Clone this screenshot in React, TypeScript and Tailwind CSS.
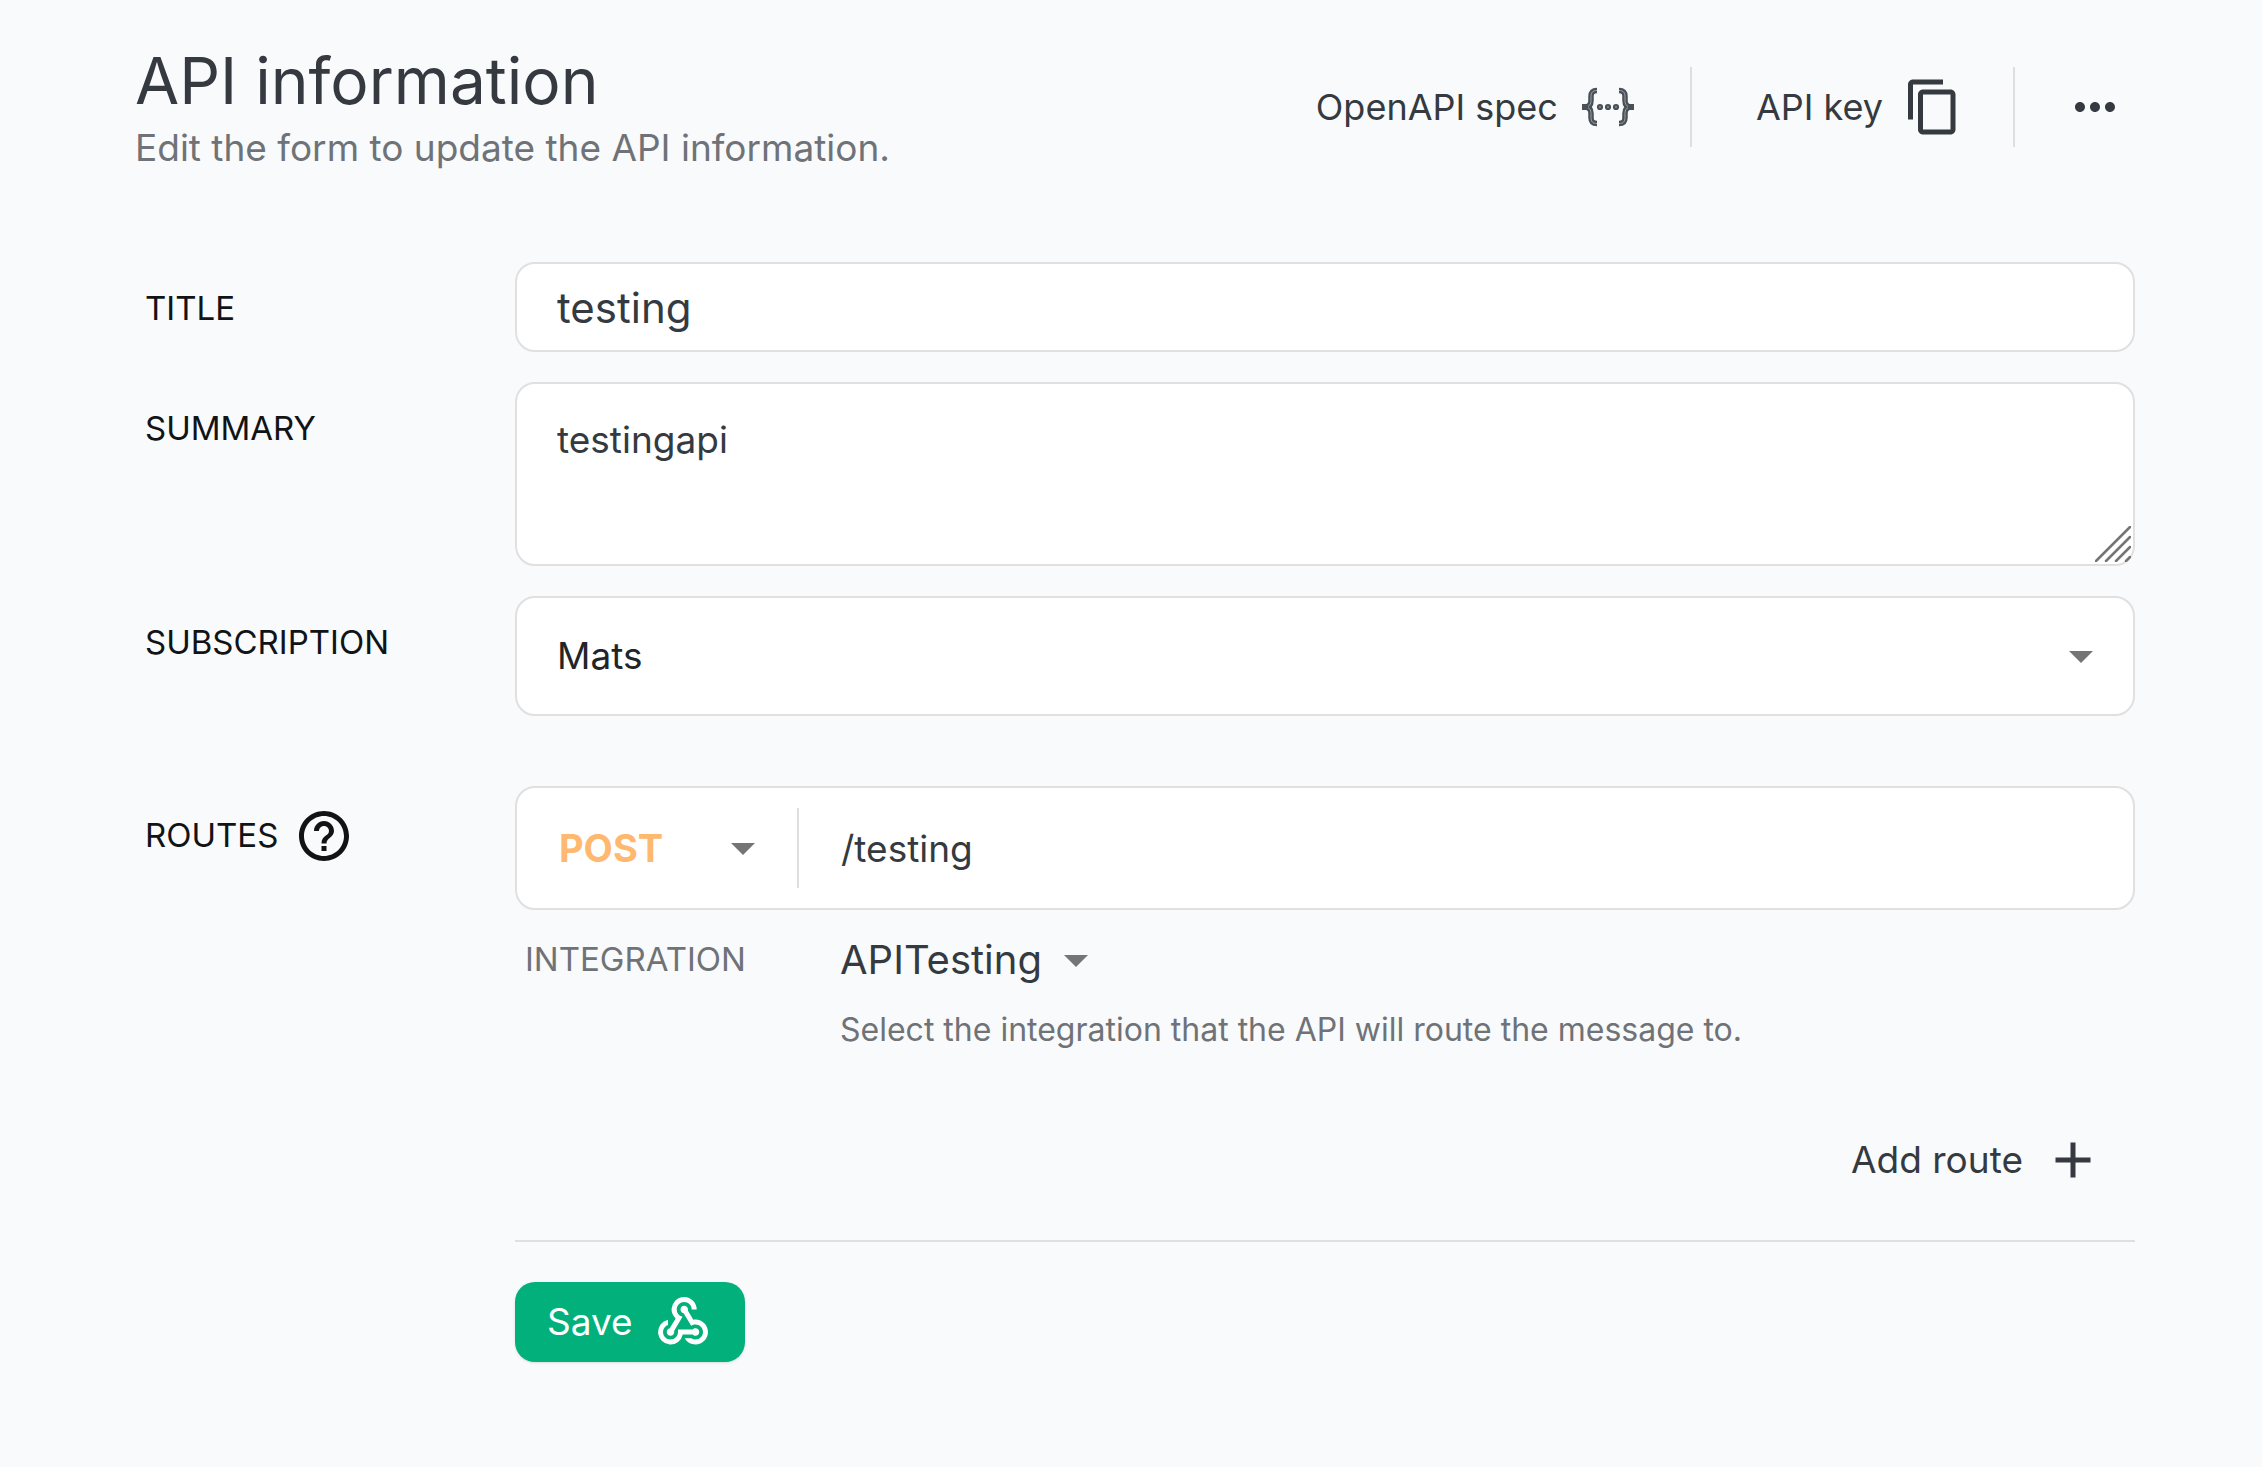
import { useState } from "react";
import { MdContentCopy, MdHelpOutline, MdMoreHoriz, MdAdd, MdWebhook } from "react-icons/md";

function Caret({ className }: { className: string }) {
  return (
    <svg aria-hidden="true" viewBox="0 0 24 12" className={`pointer-events-none absolute h-3 w-6 fill-[#757575] ${className}`}>
      <path d="M0 0h24L12 12z" />
    </svg>
  );
}

const BRACE = "M19 13.500C14.500 13.500 13 15.500 13 19.500V23.500C13 27 11.500 30 7 30C11.500 30 13 33 13 36.500V40.500C13 44.500 14.500 46.500 19 46.500";

function Brace() {
  return (
    <>
      <path d={BRACE} className="stroke-[#495057]" strokeWidth="5.500" />
      <path d="M4 30h7" className="stroke-[#495057]" strokeWidth="6" />
      <path d={BRACE} className="stroke-[#9ea3a7]" strokeWidth="1" />
      <path d="M4 30h6" className="stroke-[#495057]" strokeWidth="4" />
    </>
  );
}

function BracesIcon() {
  return (
    <svg aria-hidden="true" viewBox="0 0 60 60" className="size-[60px] fill-none">
      <Brace />
      <g transform="translate(60 0) scale(-1 1)">
        <Brace />
      </g>
      <g className="fill-[#8f9498] stroke-[#495057]" strokeWidth="2.2">
        <circle cx="22" cy="30" r="2" />
        <circle cx="30" cy="30" r="2" />
        <circle cx="38" cy="30" r="2" />
      </g>
    </svg>
  );
}

const box = "w-full rounded-[20px] border-2 border-[#e0e0e0] bg-white";
const label = "flex h-[90px] items-center pt-0.5 pl-2.5 text-[33px] leading-10 text-[#111315]";

export default function App() {
  const [title, setTitle] = useState("testing");
  const [summary, setSummary] = useState("testingapi");
  const [path, setPath] = useState("/testing");

  return (
    <main className="min-h-screen bg-[#f9fafc] pt-12 pr-[127px] pb-24 pl-[135px] font-['Inter',sans-serif] text-[#343a40]">
      <header className="flex items-start justify-between">
        <div>
          <h1 className="text-[64px] leading-[66px]">API information</h1>
          <p className="mt-2.5 text-[37px] leading-[48px] text-[#6f7377]">Edit the form to update the API information.</p>
        </div>
        <div className="mt-[19px] flex h-20 items-stretch text-[36px]">
          <button type="button" className="flex items-center gap-5 pr-[52px]">
            OpenAPI spec
            <BracesIcon />
          </button>
          <span className="w-0.5 bg-[#dcdee0]" />
          <button type="button" className="flex items-center gap-5 pr-[50px] pl-16">
            API key
            <MdContentCopy className="size-[60px]" />
          </button>
          <span className="w-0.5 bg-[#dcdee0]" />
          <button type="button" aria-label="More" className="flex items-center pr-2.5 pl-[50px]">
            <MdMoreHoriz className="size-[60px]" />
          </button>
        </div>
      </header>

      <form className="mt-[90px] grid grid-cols-[380px_1fr] items-start gap-y-[30px]" onSubmit={(e) => e.preventDefault()}>
        <label htmlFor="title" className={label}>TITLE</label>
        <input id="title" value={title} onChange={(e) => setTitle(e.target.value)} className={`${box} h-[90px] px-10 text-[42px] outline-none`} />

        <label htmlFor="summary" className={label}>SUMMARY</label>
        <div className="relative">
          <textarea
            id="summary"
            value={summary}
            onChange={(e) => setSummary(e.target.value)}
            className={`${box} block h-[184px] resize-none px-10 py-8 text-[37px] leading-[48px] outline-none`}
          />
          <svg aria-hidden="true" viewBox="0 0 36 36" className="pointer-events-none absolute right-1 bottom-1 size-9 fill-none stroke-[#757575]" strokeWidth="2.5" strokeLinecap="round">
            <path d="M1 35 35 1M11 35 35 11M21 35 35 21M31 35l4-4" />
          </svg>
        </div>

        <label htmlFor="subscription" className={label}>SUBSCRIPTION</label>
        <div className="relative">
          <select id="subscription" className={`${box} block h-[120px] appearance-none px-10 text-[37px] text-[#212529] outline-none`}>
            <option>Mats</option>
          </select>
          <Caret className="top-[55px] right-[42px]" />
        </div>

        <div className="mt-10 flex h-[100px] items-center gap-4 pl-2.5 text-[33px] text-[#111315]">
          <label htmlFor="path">ROUTES</label>
          <button type="button" aria-label="Help">
            <MdHelpOutline className="size-[60px]" />
          </button>
        </div>
        <div className="mt-10">
          <div className={`${box} flex h-[124px] items-center`}>
            <div className="relative">
              <select aria-label="Method" className="block h-[120px] w-[280px] appearance-none rounded-[20px] pl-[42px] text-[38px] font-bold text-[#ffb870] outline-none">
                <option>POST</option>
              </select>
              <Caret className="top-[55px] right-[42px]" />
            </div>
            <span className="h-20 w-0.5 bg-[#dcdee0]" />
            <input id="path" value={path} onChange={(e) => setPath(e.target.value)} className="h-[120px] min-w-0 flex-1 rounded-[20px] px-[42px] text-[37px] outline-none" />
          </div>

          <div className="mt-2.5 grid grid-cols-[325px_1fr] items-center">
            <label htmlFor="integration" className="pl-2.5 text-[33px] text-[#6f7377]">INTEGRATION</label>
            <div className="relative justify-self-start">
              <select id="integration" className="block h-20 appearance-none bg-transparent pr-[46px] text-[40px] outline-none [field-sizing:content]">
                <option>APITesting</option>
              </select>
              <Caret className="top-[35px] right-0" />
            </div>
            <p className="col-start-2 mt-2.5 text-[32px] leading-10 text-[#6f7377]">
              Select the integration that the API will route the message to.
            </p>
          </div>

          <div className="mt-[70px] flex justify-end pr-8">
            <button type="button" className="flex h-20 items-center gap-5 text-[37px]">
              Add route
              <MdAdd className="size-[60px]" />
            </button>
          </div>

          <hr className="mt-10 border-t-2 border-[#e0e0e0]" />

          <button type="submit" className="mt-10 flex h-20 items-center gap-5 rounded-[20px] bg-[#02b07b] px-8 text-[37px] text-white shadow-sm">
            Save
            <MdWebhook className="size-[60px]" />
          </button>
        </div>
      </form>
    </main>
  );
}
